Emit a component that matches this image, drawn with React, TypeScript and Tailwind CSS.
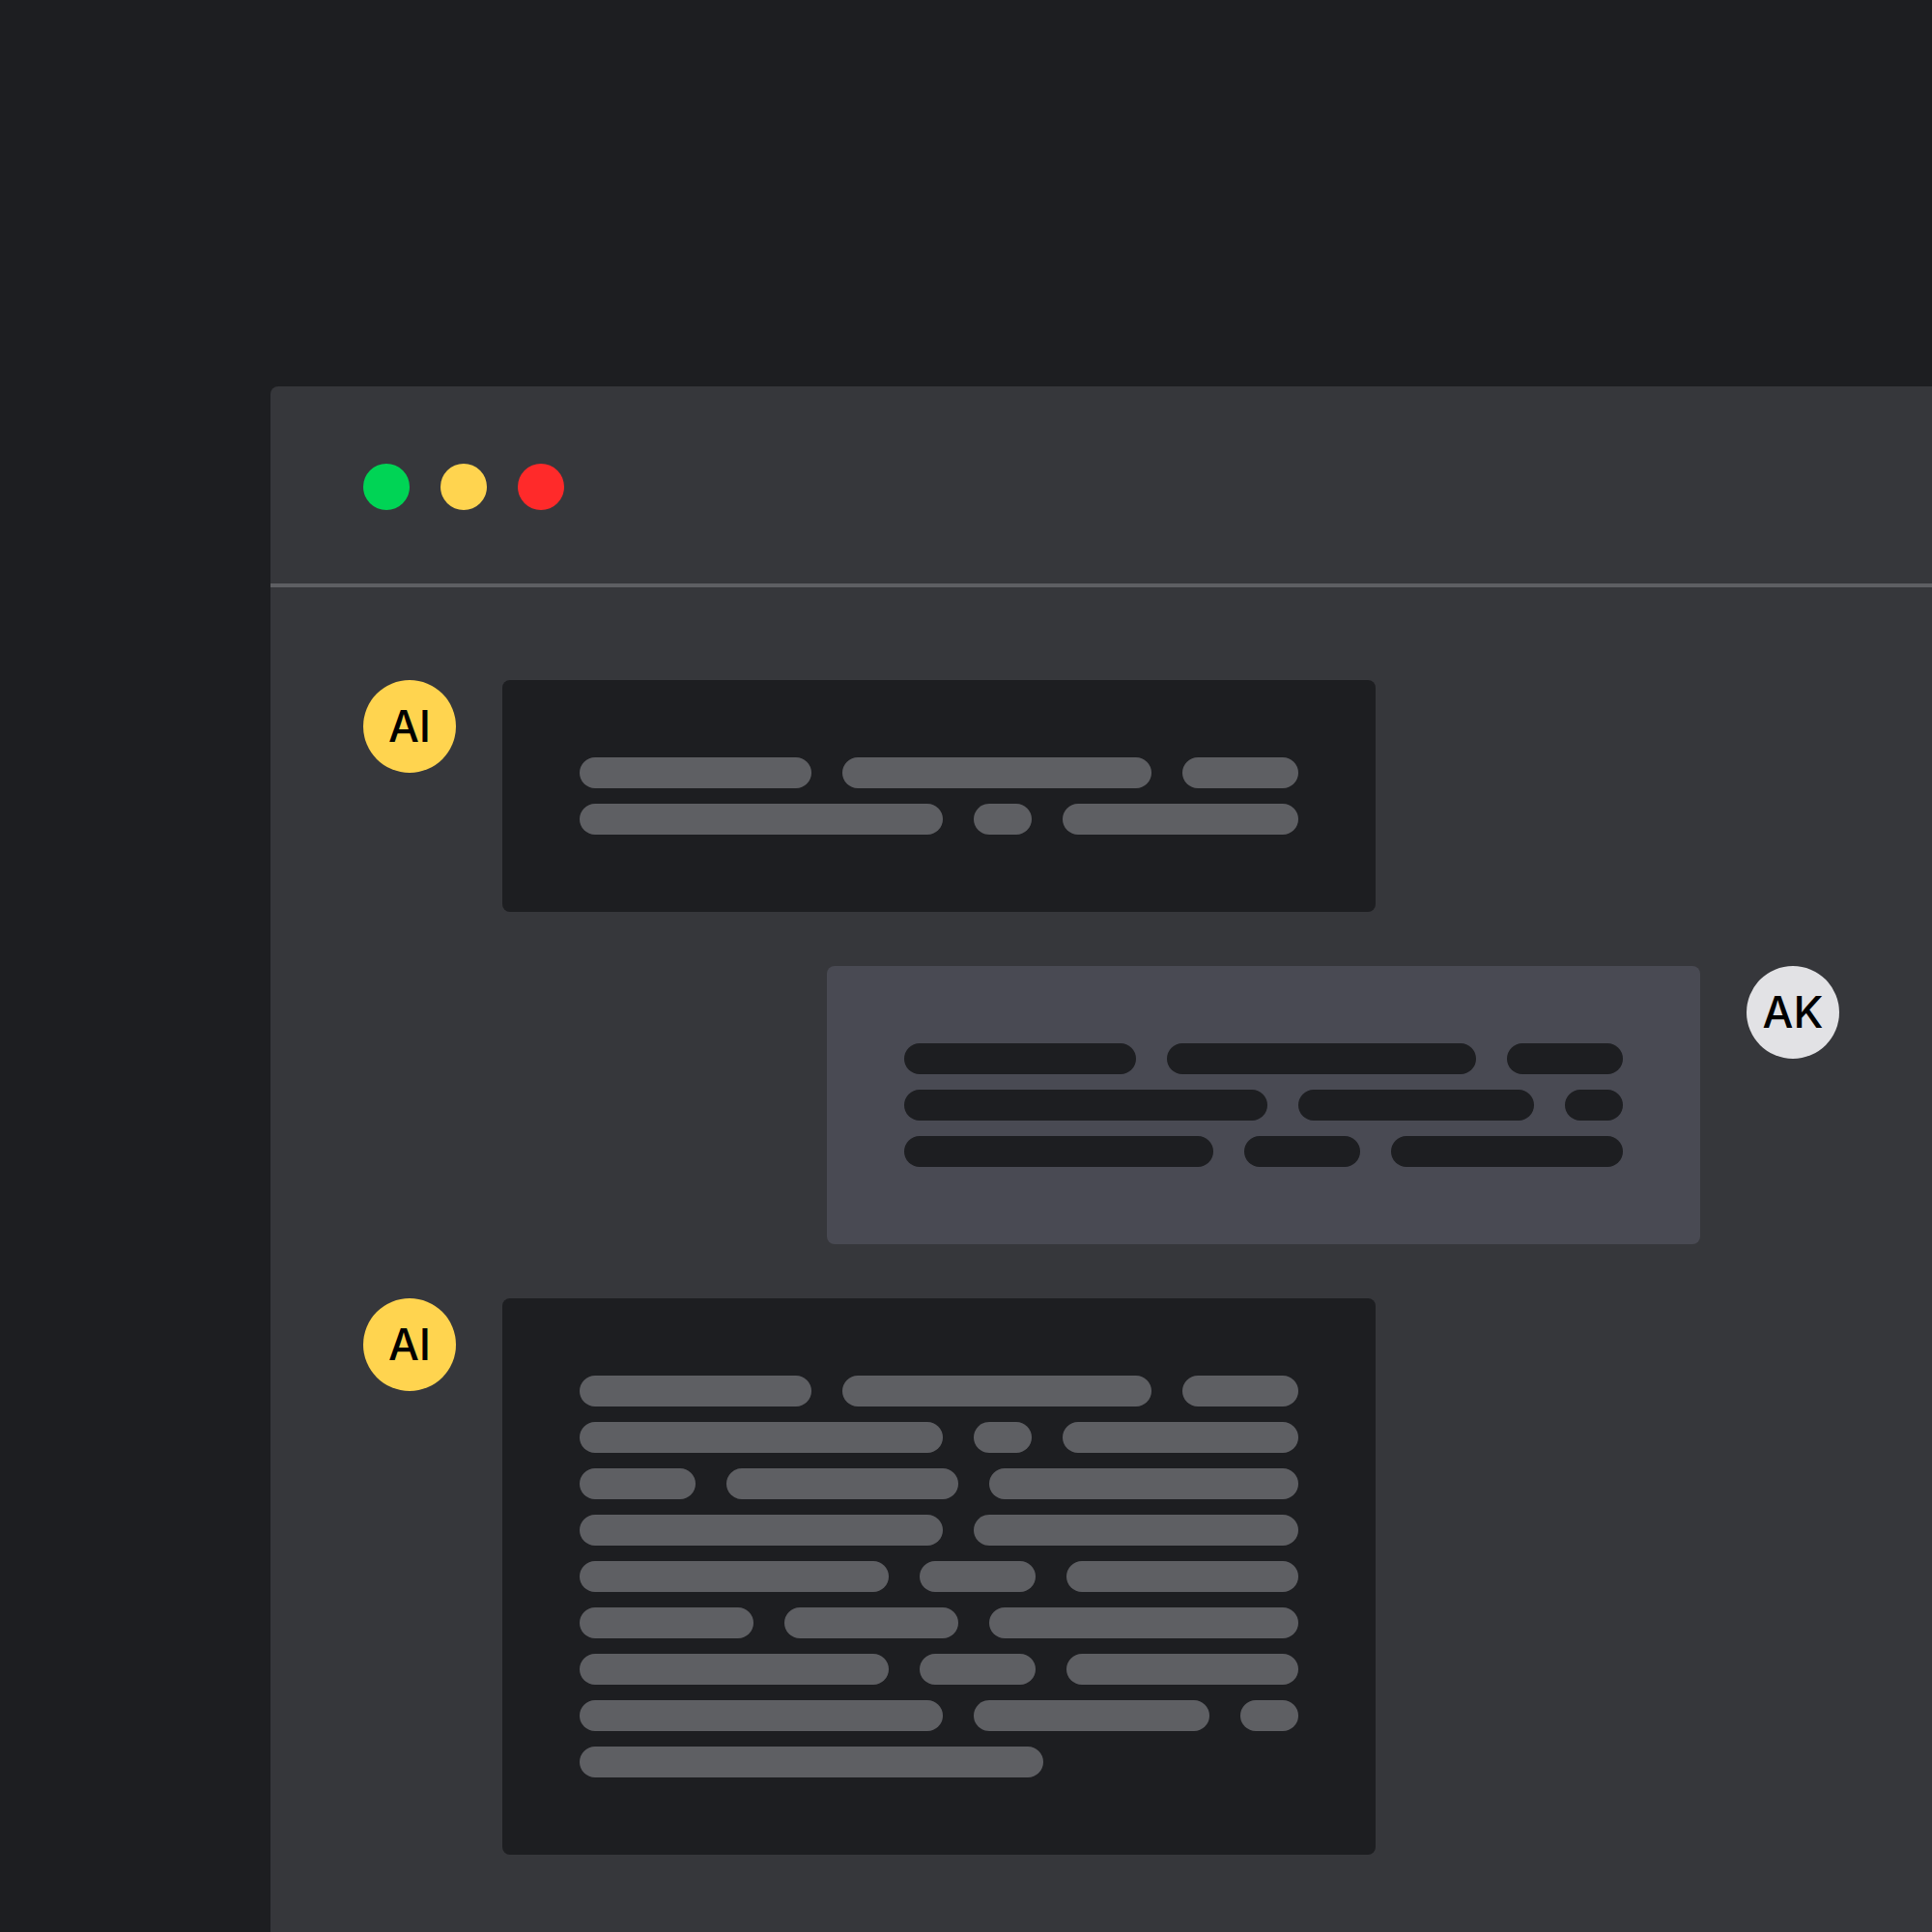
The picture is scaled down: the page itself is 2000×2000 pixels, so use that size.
const aiFirst = [
  [240, 320, 120],
  [376, 60, 244],
];

const userRows = [
  [240, 320, 120],
  [376, 244, 60],
  [320, 120, 240],
];

const aiLong = [
  [240, 320, 120],
  [376, 60, 244],
  [120, 240, 320],
  [376, 336],
  [320, 120, 240],
  [180, 180, 320],
  [320, 120, 240],
  [376, 244, 60],
  [480],
];

function Avatar({ label, light }: { label: string; light?: boolean }) {
  return (
    <div
      className={
        light
          ? "flex h-24 w-24 shrink-0 items-center justify-center rounded-full bg-[#e2e2e5] [font-family:Inter,sans-serif] text-[45px] font-medium text-black"
          : "flex h-24 w-24 shrink-0 items-center justify-center rounded-full bg-[#ffd44f] [font-family:Inter,sans-serif] text-[45px] font-medium text-black"
      }
    >
      {label}
    </div>
  );
}

function Bubble({ rows, user }: { rows: number[][]; user?: boolean }) {
  return (
    <div
      className={
        user
          ? "flex w-[904px] flex-col gap-4 rounded-lg bg-[#494a53] p-20"
          : "flex w-[904px] flex-col gap-4 rounded-lg bg-[#1d1e21] p-20"
      }
    >
      {rows.map((row, i) => (
        <div key={i} className="flex gap-8">
          {row.map((w, j) => (
            <div
              key={j}
              style={{ width: w }}
              className={
                user
                  ? "h-8 rounded-2xl bg-[#1d1e21]"
                  : "h-8 rounded-2xl bg-[#5e5f63]"
              }
            />
          ))}
        </div>
      ))}
    </div>
  );
}

export default function App() {
  return (
    <div className="h-[2000px] w-[2000px] overflow-hidden bg-[#1d1e21] pl-[280px] pt-[400px]">
      <div className="h-[1600px] w-[1720px] rounded-tl-lg bg-[#36373b]">
        <div className="flex h-[208px] gap-8 border-b-4 border-[#5e5f63] pl-24 pt-20">
          <div className="h-12 w-12 rounded-full bg-[#00d455]" />
          <div className="h-12 w-12 rounded-full bg-[#ffd44f]" />
          <div className="h-12 w-12 rounded-full bg-[#ff2a2a]" />
        </div>
        <div className="flex flex-col gap-14 px-24 pt-24">
          <div className="flex items-start gap-12">
            <Avatar label="AI" />
            <Bubble rows={aiFirst} />
          </div>
          <div className="flex items-start justify-end gap-12">
            <Bubble rows={userRows} user />
            <Avatar label="AK" light />
          </div>
          <div className="flex items-start gap-12">
            <Avatar label="AI" />
            <Bubble rows={aiLong} />
          </div>
        </div>
      </div>
    </div>
  );
}
